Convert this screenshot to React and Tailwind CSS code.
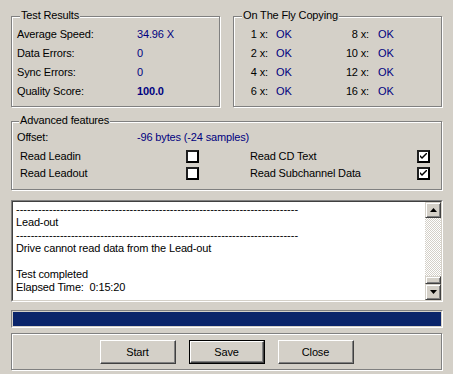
import React from "react";

const etched = "border border-[#808080] shadow-[1px_1px_0_#ffffff,inset_1px_1px_0_#ffffff]";

function GroupBox({ title, className = "", legendLeft = "left-[8px]", children }) {
  return (
    <div className={`relative ${etched} ${className}`}>
      <span className={`absolute top-[-8px] ${legendLeft} bg-[#d4d0c8] px-[1px] leading-[13px] text-black`}>
        {title}
      </span>
      {children}
    </div>
  );
}

function CheckBox({ checked }) {
  return (
    <div className="w-[13px] h-[13px] border-2 border-t-[#202020] border-l-[#202020] border-b-black border-r-black bg-white flex items-center justify-center">
      {checked && (
        <svg width="7" height="7" viewBox="0 0 7 7">
          <path d="M0 2 L0 4 L2 6 L7 1 L7 -1 L2 4 Z" fill="#000" />
        </svg>
      )}
    </div>
  );
}

function ScrollBtn({ dir }) {
  return (
    <div className="w-[16px] h-[16px] bg-[#d4d0c8] border border-t-[#d4d0c8] border-l-[#d4d0c8] border-b-[#404040] border-r-[#404040] shadow-[inset_1px_1px_0_#ffffff,inset_-1px_-1px_0_#808080] flex items-center justify-center">
      <svg width="7" height="4" viewBox="0 0 7 4">
        {dir === "up" ? (
          <path d="M3.5 0 L7 4 L0 4 Z" fill="#000" />
        ) : (
          <path d="M0 0 L7 0 L3.5 4 Z" fill="#000" />
        )}
      </svg>
    </div>
  );
}

function Button({ label, def }) {
  const inner = (
    <div className="w-full h-full bg-[#d4d0c8] border border-t-white border-l-white border-b-[#404040] border-r-[#404040] shadow-[inset_-1px_-1px_0_#808080] flex items-center justify-center leading-[13px] text-black">
      {label}
    </div>
  );
  return def ? (
    <div className="w-[76px] h-[24px] border border-black">{inner}</div>
  ) : (
    <div className="w-[76px] h-[24px]">{inner}</div>
  );
}

export default function App() {
  const dashes = "-".repeat(77);
  const otf = [
    ["1 x:", "OK", "8 x:", "OK"],
    ["2 x:", "OK", "10 x:", "OK"],
    ["4 x:", "OK", "12 x:", "OK"],
    ["6 x:", "OK", "16 x:", "OK"],
  ];
  return (
    <div
      className="w-[453px] h-[374px] bg-[#d4d0c8] pl-[11px] pt-[16px] text-[11px] tracking-[-0.15px] text-black overflow-hidden"
      style={{ fontFamily: '"Liberation Sans", Arial, sans-serif' }}
    >
      {/* Top row */}
      <div className="flex gap-[13px] h-[91px]">
        <GroupBox title="Test Results" className="w-[209px] h-[91px]">
          <div className="pt-[8px] pl-[5px]">
            {[
              ["Average Speed:", "34.96 X", false],
              ["Data Errors:", "0", false],
              ["Sync Errors:", "0", false],
              ["Quality Score:", "100.0", true],
            ].map(([l, v, b]) => (
              <div key={l} className="flex h-[19px] leading-[19px]">
                <span className="w-[120px]">{l}</span>
                <span className={`text-[#000080] ${b ? "font-bold" : ""}`}>{v}</span>
              </div>
            ))}
          </div>
        </GroupBox>
        <GroupBox title="On The Fly Copying" className="w-[209px] h-[91px]">
          <div className="pt-[8px]">
            {otf.map((r) => (
              <div key={r[0]} className="grid grid-cols-[101px_1fr] h-[19px] leading-[19px]">
                <div className="flex">
                  <span className="w-[34px] text-right">{r[0]}</span>
                  <span className="ml-[8px] text-[#000080]">{r[1]}</span>
                </div>
                <div className="flex">
                  <span className="w-[34px] text-right">{r[2]}</span>
                  <span className="ml-[9px] text-[#000080]">{r[3]}</span>
                </div>
              </div>
            ))}
          </div>
        </GroupBox>
      </div>

      {/* Advanced features */}
      <GroupBox title="Advanced features" legendLeft="left-[7px]" className="mt-[14px] w-[431px] h-[69px]">
        <div className="pt-[7px]">
          <div className="flex h-[16px] leading-[16px] pl-[5px]">
            <span className="w-[120px]">Offset:</span>
            <span className="text-[#000080]">-96 bytes (-24 samples)</span>
          </div>
          <div className="mt-[3px] pl-[8px]">
            {[
              ["Read Leadin", false, "Read CD Text", true],
              ["Read Leadout", false, "Read Subchannel Data", true],
            ].map((r) => (
              <div key={r[0]} className="flex items-center h-[17px] leading-[17px]">
                <span className="w-[166px]">{r[0]}</span>
                <CheckBox checked={r[1]} />
                <span className="ml-[51px] w-[167px]">{r[2]}</span>
                <CheckBox checked={r[3]} />
              </div>
            ))}
          </div>
        </div>
      </GroupBox>

      {/* Log */}
      <div className="mt-[10px] w-[432px] h-[102px] border border-t-[#808080] border-l-[#808080] border-b-white border-r-white">
        <div className="flex h-full bg-white border border-t-[#404040] border-l-[#404040] border-b-[#d4d0c8] border-r-[#d4d0c8]">
          <div className="flex-1 pl-[3px] pt-[1px] leading-[13px] overflow-hidden">
            <div className="whitespace-nowrap tracking-normal">{dashes}</div>
            <div>Lead-out</div>
            <div className="whitespace-nowrap tracking-normal">{dashes}</div>
            <div>Drive cannot read data from the Lead-out</div>
            <div className="h-[13px]"></div>
            <div>Test completed</div>
            <div className="whitespace-pre">Elapsed Time:  0:15:20</div>
          </div>
          <div className="w-[16px] flex flex-col">
            <ScrollBtn dir="up" />
            <div className="flex-1 bg-[image:repeating-conic-gradient(#d4d0c8_0%_25%,#ffffff_0%_50%)] bg-size-[2px_2px]"></div>
            <div className="h-[8px] bg-[#d4d0c8] border border-t-[#d4d0c8] border-l-[#d4d0c8] border-b-[#404040] border-r-[#404040] shadow-[inset_1px_1px_0_#ffffff,inset_-1px_-1px_0_#808080]"></div>
            <ScrollBtn dir="down" />
          </div>
        </div>
      </div>

      {/* Progress */}
      <div className="mt-[8px] w-[432px] h-[18px] border border-t-[#808080] border-l-[#808080] border-b-white border-r-white p-[1px]">
        <div className="w-full h-full bg-[#0a246a]"></div>
      </div>

      {/* Buttons */}
      <div className={`mt-[5px] w-[431px] h-[37px] ${etched} flex justify-center gap-[13px] pt-[6px]`}>
        <Button label="Start" />
        <Button label="Save" def />
        <Button label="Close" />
      </div>
    </div>
  );
}
